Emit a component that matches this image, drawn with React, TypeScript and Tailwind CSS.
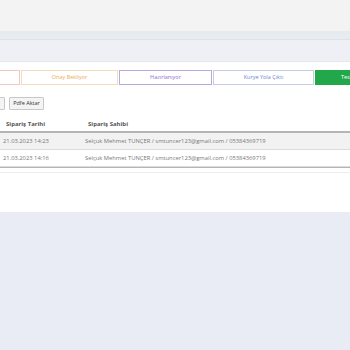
import React from "react";

const tabs = [
  { label: "Yeni Sipariş", width: "w-[97px]", cls: "border-[#f1c6c6] text-[#e07b7b] bg-white justify-center" },
  { label: "Onay Bekliyor", width: "w-[97px]", cls: "border-[#f3dcbc] text-[#eeaa5c] bg-white justify-center" },
  { label: "Hazırlanıyor", width: "w-[93px]", cls: "border-[#b8a8dc] text-[#8c6fcb] bg-white justify-center" },
  { label: "Kurye Yola Çıktı", width: "w-[101px]", cls: "border-[#c5cde3] text-[#6e88d2] bg-white justify-center" },
  { label: "Teslim Edildi", width: "w-[97px]", cls: "border-[#22a84a] text-white bg-[#22a84a] justify-start pl-[25px]" },
];

const rows = [
  { date: "21.03.2023 14:23", owner: "Selçuk Mehmet TUNÇER / smtuncer123@gmail.com / 05384369719" },
  { date: "21.03.2023 14:16", owner: "Selçuk Mehmet TUNÇER / smtuncer123@gmail.com / 05384369719" },
];

export default function App() {
  return (
    <div className="w-[350px] h-[350px] overflow-hidden bg-[#e9ecf5] font-['Open_Sans',sans-serif]">
      {/* Top bar */}
      <div className="h-[31px] bg-[#f3f3f3]" />
      <div className="h-[9px] bg-gradient-to-b from-[#e6e9ee] to-[#e9ecf1] border-b border-[#dde2e8]" />
      <div className="h-[22px] bg-[#eef0f5] border-b border-[#e4e7ec]" />

      {/* Card */}
      <div className="h-[150px] bg-white overflow-hidden">
        {/* Status tabs */}
        <div className="flex gap-[1px] pt-[8px] ml-[-77px]">
          {tabs.map((t) => (
            <div
              key={t.label}
              className={`${t.width} shrink-0 h-[15px] border flex items-center text-[5.5px] leading-none whitespace-nowrap ${t.cls}`}
            >
              {t.label}
            </div>
          ))}
        </div>

        {/* Buttons */}
        <div className="flex gap-[4px] mt-[12px] ml-[-25px]">
          <button className="w-[30px] h-[13px] border border-[#c8c8c8] bg-[#f4f4f4] rounded-[1px] text-[5.5px] text-[#333] leading-none">
            Excel
          </button>
          <button className="w-[35px] h-[13px] border border-[#c8c8c8] bg-[#f4f4f4] rounded-[1px] text-[5.5px] text-[#333] leading-none">
            Pdfe Aktar
          </button>
        </div>

        {/* Table */}
        <div className="mt-[7px]">
          <div className="flex h-[16px] items-center border-b-2 border-[#b5b5b5] text-[6px] font-bold text-[#555]">
            <div className="w-[82px] pl-[6px]">Sipariş Tarihi</div>
            <div className="pl-[6px]">Sipariş Sahibi</div>
          </div>
          {rows.map((r, i) => (
            <div
              key={i}
              className={`flex h-[17px] items-center border-b border-[#dcdcdc] text-[5.8px] text-[#777] ${i === 0 ? "bg-[#f2f2f2]" : "bg-white"}`}
            >
              <div className="w-[82px] pl-[3px]">{r.date}</div>
              <div className="pl-[3px] whitespace-nowrap">{r.owner}</div>
            </div>
          ))}
          <div className="h-[1px] bg-[#b5b5b5]" />
          <div className="h-[5px] border-b border-[#eeeeee]" />
        </div>
      </div>
    </div>
  );
}
